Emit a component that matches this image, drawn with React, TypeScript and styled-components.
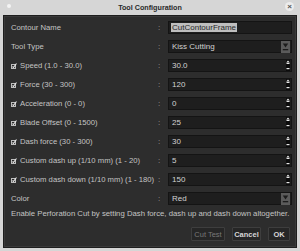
import React from 'react'
import styled, { createGlobalStyle } from 'styled-components';

const GlobalStyle = createGlobalStyle`
  html, body {
    margin: 0;
    padding: 0;
    background: rgb(214, 214, 214);
  }
  body {
    font-family: "Liberation Sans", Arial, sans-serif;
  }
`;

type Row = {
  label: string;
  check?: boolean;
  kind: 'text' | 'combo' | 'spin';
  value: string;
  selected?: boolean;
};

const rows: Row[] = [
  { label: 'Contour Name', kind: 'text', value: 'CutContourFrame', selected: true },
  { label: 'Tool Type', kind: 'combo', value: 'Kiss Cutting' },
  { label: 'Speed (1.0 - 30.0)', check: true, kind: 'spin', value: '30.0' },
  { label: 'Force (30 - 300)', check: true, kind: 'spin', value: '120' },
  { label: 'Acceleration (0 - 0)', check: true, kind: 'spin', value: '0' },
  { label: 'Blade Offset (0 - 1500)', check: true, kind: 'spin', value: '25' },
  { label: 'Dash force (30 - 300)', check: true, kind: 'spin', value: '30' },
  { label: 'Custom dash up (1/10 mm) (1 - 20)', check: true, kind: 'spin', value: '5' },
  { label: 'Custom dash down (1/10 mm) (1 - 180)', check: true, kind: 'spin', value: '150' },
  { label: 'Color', kind: 'combo', value: 'Red' },
];

const CheckIcon = () => (
  <svg width="6" height="6" viewBox="0 0 6 6">
    <rect x="0.5" y="1.5" width="4" height="4" fill="none" stroke="#bdbdbd" strokeWidth="1" />
    <path d="M1.5 3.5 L2.5 4.5 L5.5 0.5" fill="none" stroke="#e6e6e6" strokeWidth="1.1" />
  </svg>
);

const SpinArrows = () => (
  <svg width="4" height="11" viewBox="0 0 4 11">
    <rect x="0" y="0" width="4" height="11" fill="#0c0c0c" />
    <path d="M2 0.5 L3.8 2.5 L0.2 2.5 Z" fill="#e8e8e8" />
    <rect x="0.5" y="3" width="3" height="1" fill="#e8e8e8" />
    <rect x="0.5" y="8" width="3" height="1.2" fill="#e8e8e8" />
  </svg>
);

const ComboArrow = () => (
  <svg width="9" height="12" viewBox="0 0 9 12">
    <rect x="0" y="0" width="9" height="12" fill="#5b5b5b" />
    <path d="M1.8 2.5 L7.2 2.5 L4.5 6.5 Z" fill="#1c1c1c" />
    <rect x="1.8" y="8" width="5.4" height="1.3" fill="#1c1c1c" />
  </svg>
);

export default function App(): JSX.Element {
  return <Window>
    <GlobalStyle />
    <TitleBar>
      <Dot />
      <Title>Tool Configuration</Title>
      <CloseButton>×</CloseButton>
    </TitleBar>
    <Panel>
      <Form>
        {rows.map((r) => (
          <React.Fragment key={r.label}>
            <Label>
              {r.check && <CheckIcon />}
              <span>{r.label}</span>
            </Label>
            <Colon>:</Colon>
            <Field>
              {r.selected ? <Selected>{r.value}</Selected> : <Value>{r.value}</Value>}
              {r.kind === 'spin' && <SpinArrows />}
              {r.kind === 'combo' && <ComboArrow />}
            </Field>
          </React.Fragment>
        ))}
      </Form>
      <Note>Enable Perforation Cut by setting Dash force, dash up and dash down altogether.</Note>
      <Buttons>
        <Button disabled width={34}>Cut Test</Button>
        <Button bold width={29}>Cancel</Button>
        <Button bold width={22}>OK</Button>
      </Buttons>
    </Panel>
  </Window>;
}

const Window = styled.div`
  width: 300px;
  height: 251px;
  display: flex;
  flex-direction: column;
  background: rgb(214, 214, 214);
  padding: 0 3px 3px;
  box-sizing: border-box;
`;

const TitleBar = styled.div`
  position: relative;
  height: 15px;
  display: flex;
  align-items: center;
  justify-content: center;
`;

const Dot = styled.span`
  position: absolute;
  left: 4px;
  top: 4px;
  width: 4px;
  height: 4px;
  border-radius: 50%;
  background: #f4f4f4;
`;

const Title = styled.span`
  font-size: 7.2px;
  font-weight: bold;
  color: #2a2a2a;
`;

const CloseButton = styled.span`
  position: absolute;
  right: 3px;
  top: 2px;
  width: 9px;
  height: 9px;
  border-radius: 50%;
  background: #ececec;
  color: #555;
  font-size: 8px;
  line-height: 9px;
  text-align: center;
  font-weight: bold;
`;

const Panel = styled.div`
  flex: 1;
  display: flex;
  flex-direction: column;
  background: rgb(45, 45, 45);
  border: 1px solid rgb(30, 30, 30);
  box-shadow: inset 0 0 0 1px rgb(58, 58, 58);
  padding: 5px 4px 6px 6px;
`;

const Form = styled.div`
  display: grid;
  grid-template-columns: 1fr 10px 124px;
  row-gap: 6px;
  align-items: center;
`;

const Label = styled.div`
  display: flex;
  align-items: center;
  gap: 3px;
  font-size: 7.7px;
  color: rgb(196, 196, 196);
  white-space: nowrap;
  padding-left: 1px;

  svg {
    flex-shrink: 0;
  }
`;

const Colon = styled.span`
  font-size: 8px;
  color: rgb(160, 160, 160);
`;

const Field = styled.div`
  height: 13px;
  box-sizing: border-box;
  display: flex;
  align-items: center;
  justify-content: space-between;
  background: rgb(30, 30, 30);
  border: 1px solid rgb(20, 20, 20);
  padding: 0 1px 0 3px;
`;

const Value = styled.span`
  font-size: 8px;
  color: rgb(210, 210, 210);
`;

const Selected = styled.span`
  font-size: 8px;
  color: rgb(40, 40, 40);
  background: rgb(190, 190, 190);
  padding: 0 1px;
  margin-left: -1px;
`;

const Note = styled.div`
  font-size: 7.75px;
  color: rgb(196, 196, 196);
  white-space: nowrap;
  margin-top: 4px;
  padding-left: 1px;
`;

const Buttons = styled.div`
  margin-top: auto;
  display: flex;
  justify-content: flex-end;
  gap: 7px;
  padding-right: 2px;
`;

const Button = styled.button<{ bold?: boolean; width: number }>`
  width: ${(p) => p.width}px;
  height: 14px;
  padding: 0;
  font-family: "Liberation Sans", Arial, sans-serif;
  font-size: 7.5px;
  font-weight: ${(p) => (p.bold ? 'bold' : 'normal')};
  color: ${(p) => (p.disabled ? 'rgb(120, 120, 120)' : 'rgb(215, 215, 215)')};
  background: rgb(38, 38, 38);
  border: 1px solid rgb(62, 62, 62);
  border-radius: 1px;
`;
